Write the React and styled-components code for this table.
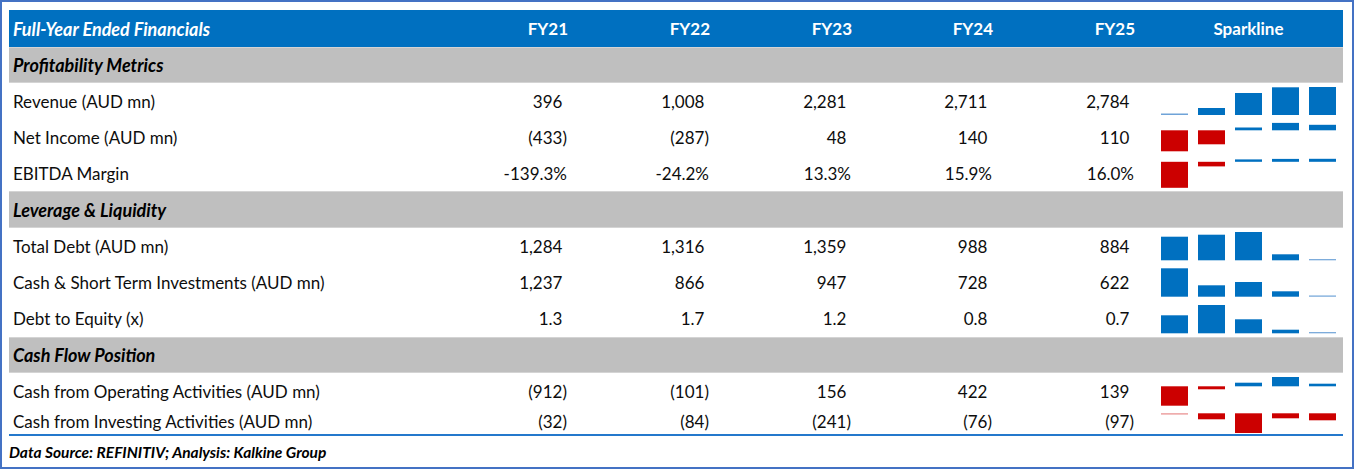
import React from "react";
import styled, { createGlobalStyle } from "styled-components";

const GlobalStyle = createGlobalStyle`
  html, body { margin: 0; padding: 0; background: #ffffff; }
  body { font-family: Lato, "Open Sans", sans-serif; color: #000; }
`;

const COLS = "468px 142px 142px 142px 142px 105px 193px";
const PAD = [52, 52, 52, 53, 16];

const Frame = styled.div`
  box-sizing: border-box;
  width: 1354px;
  height: 469px;
  border: 2px solid #4472c4;
  padding: 8px 9px 0 7px;
  display: flex;
  flex-direction: column;
  background: #fff;
`;

const Table = styled.div`
  display: flex;
  flex-direction: column;
  width: 1334px;
`;

const Row = styled.div`
  display: grid;
  grid-template-columns: ${COLS};
  align-items: center;
  height: ${(p) => p.$h}px;
  font-size: 17px;
`;

const HeaderRow = styled(Row)`
  background: #0070c0;
  color: #ffffff;
  font-weight: 700;
`;

const SectionRow = styled(Row)`
  background: #bfbfbf;
  box-shadow: inset 0 1px 0 #d4d4d4, inset 0 -1px 0 #d4d4d4;
`;

const TitleCell = styled.div`
  padding-left: 4px;
  font-size: 18px;
  font-style: italic;
  font-weight: 700;
  white-space: nowrap;
`;

const SectionCell = styled(TitleCell)`
  grid-column: 1 / -1;
  color: #000;
`;

const HeadCell = styled.div`
  text-align: ${(p) => (p.$center ? "center" : "right")};
  padding-right: ${(p) => (p.$center ? 0 : p.$pr)}px;
  padding-left: ${(p) => (p.$center ? 4 : 0)}px;
  white-space: nowrap;
`;

const LabelCell = styled.div`
  padding-left: 4px;
  white-space: nowrap;
  color: #0d0d0d;
`;

const ValueCell = styled.div`
  text-align: right;
  padding-right: ${(p) => p.$pr}px;
  white-space: nowrap;
  color: #0d0d0d;
`;

const Ghost = styled.span`
  visibility: hidden;
`;

const SparkCell = styled.div`
  height: 100%;
  display: flex;
  align-items: stretch;
`;

const Rule = styled.div`
  height: 2px;
  width: 1334px;
  background: #2478cc;
`;

const Footnote = styled.div`
  margin-top: 7px;
  font-size: 15.5px;
  font-weight: 700;
  font-style: italic;
  color: #000;
  white-space: nowrap;
`;

const BLUE = "#0070c0";
const RED = "#cc0000";
const LBLUE = "#6fa3d8";
const LRED = "#e88a8a";

function Spark({ h, axis, bars, light }) {
  return (
    <svg width="193" height={h} viewBox={`0 0 193 ${h}`} style={{ display: "block" }}>
      {bars.map((v, i) => {
        const x = 11 + i * 37;
        const pos = v > 0;
        const isLight = light === i;
        const fill = pos ? (isLight ? LBLUE : BLUE) : isLight ? LRED : RED;
        const y = pos ? axis - v : axis;
        return <rect key={i} x={x} y={y} width={27} height={Math.abs(v)} fill={fill} />;
      })}
    </svg>
  );
}

const rows = [
  { section: "Profitability Metrics", h: 36 },
  {
    label: "Revenue (AUD mn)", h: 36,
    vals: ["396", "1,008", "2,281", "2,711", "2,784"],
    spark: { axis: 32, bars: [1.5, 7, 22, 27.7, 28], light: 0 },
  },
  {
    label: "Net Income (AUD mn)", h: 36,
    vals: ["(433)", "(287)", "48", "140", "110"],
    spark: { axis: 11.3, bars: [-21, -14, 2.8, 7.4, 5.5] },
  },
  {
    label: "EBITDA Margin", h: 36,
    vals: ["-139.3%", "-24.2%", "13.3%", "15.9%", "16.0%"],
    spark: { axis: 6.8, bars: [-26, -4.6, 2.4, 2.9, 3] },
  },
  { section: "Leverage & Liquidity", h: 37 },
  {
    label: "Total Debt (AUD mn)", h: 36,
    vals: ["1,284", "1,316", "1,359", "988", "884"],
    spark: { axis: 32.3, bars: [23.6, 25.6, 28.3, 6, 1.2], light: 4 },
  },
  {
    label: "Cash & Short Term Investments (AUD mn)", h: 36,
    vals: ["1,237", "866", "947", "728", "622"],
    spark: { axis: 32.7, bars: [28.4, 11.4, 14.7, 5.4, 1.2], light: 4 },
  },
  {
    label: "Debt to Equity (x)", h: 37,
    vals: ["1.3", "1.7", "1.2", "0.8", "0.7"],
    spark: { axis: 33.3, bars: [18, 28.3, 14, 3.6, 1.2], light: 4 },
  },
  { section: "Cash Flow Position", h: 36 },
  {
    label: "Cash from Operating Activities (AUD mn)", h: 36,
    vals: ["(912)", "(101)", "156", "422", "139"],
    spark: { axis: 13.3, bars: [-19.4, -3, 3.6, 9.3, 2.6] },
  },
  {
    label: "Cash from Investing Activities (AUD mn)", h: 25,
    vals: ["(32)", "(84)", "(241)", "(76)", "(97)"],
    spark: { axis: 4.3, bars: [-1.2, -6, -19.7, -5, -7], light: 0 },
  },
];

function Value({ v, pr }) {
  const plain = !v.endsWith(")") && !v.endsWith("%");
  return (
    <ValueCell $pr={pr}>
      {v}
      {plain && <Ghost>)</Ghost>}
    </ValueCell>
  );
}

export default function App() {
  return (
    <>
      <GlobalStyle />
      <Frame>
        <Table>
          <HeaderRow $h={37}>
            <TitleCell>Full-Year Ended Financials</TitleCell>
            {["FY21", "FY22", "FY23", "FY24", "FY25"].map((y, i) => (
              <HeadCell key={y} $pr={PAD[i] - 1}>{y}</HeadCell>
            ))}
            <HeadCell $center>Sparkline</HeadCell>
          </HeaderRow>
          {rows.map((r, idx) =>
            r.section ? (
              <SectionRow key={idx} $h={r.h}>
                <SectionCell>{r.section}</SectionCell>
              </SectionRow>
            ) : (
              <Row key={idx} $h={r.h}>
                <LabelCell>{r.label}</LabelCell>
                {r.vals.map((v, i) => (
                  <Value key={i} v={v} pr={PAD[i]} />
                ))}
                <SparkCell>
                  <Spark h={r.h} {...r.spark} />
                </SparkCell>
              </Row>
            )
          )}
          <Rule />
        </Table>
        <Footnote>Data Source: REFINITIV; Analysis: Kalkine Group</Footnote>
      </Frame>
    </>
  );
}
